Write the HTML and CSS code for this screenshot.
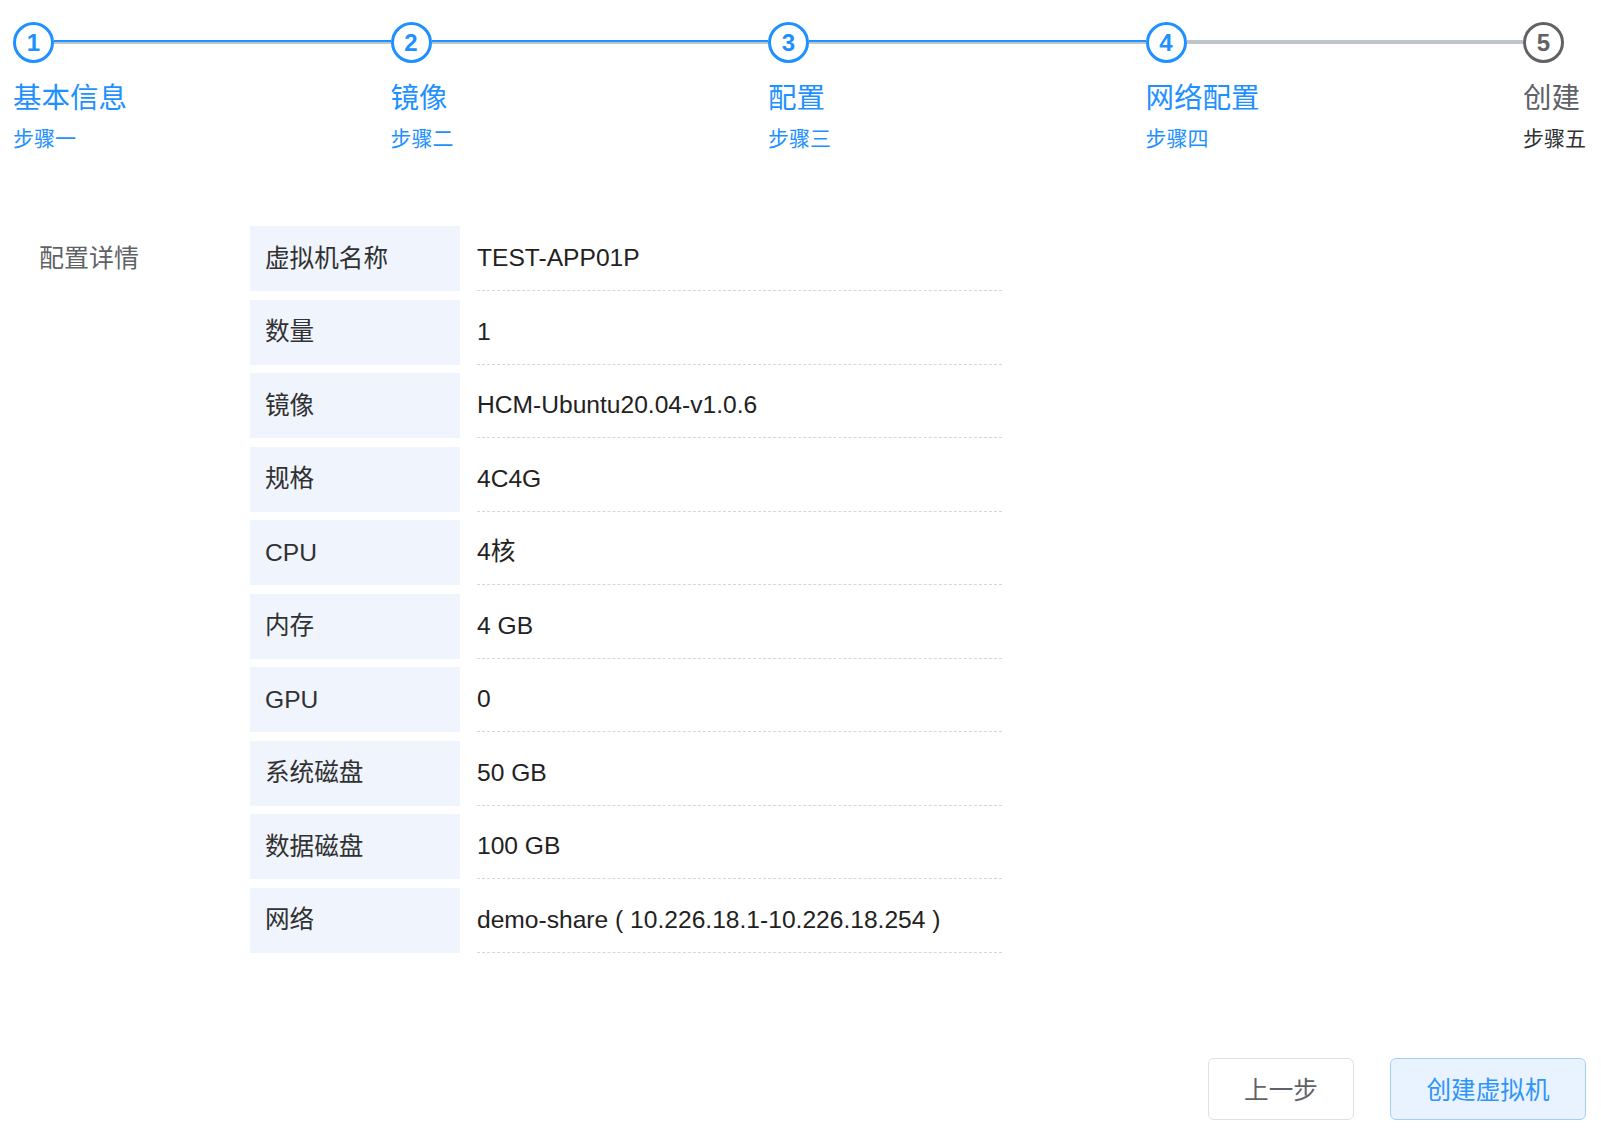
FILE: index.html
```html
<!DOCTYPE html>
<html lang="zh">
<head>
<meta charset="utf-8">
<title>创建虚拟机</title>
<link rel="stylesheet" href="styles.css">
</head>
<body>
<div class="steps">
  <div class="step done">
    <div class="head"><span class="icon">1</span><span class="line"><i class="fill"></i></span></div>
    <div class="title">基本信息</div>
    <div class="desc">步骤一</div>
  </div>
  <div class="step done">
    <div class="head"><span class="icon">2</span><span class="line"><i class="fill"></i></span></div>
    <div class="title">镜像</div>
    <div class="desc">步骤二</div>
  </div>
  <div class="step done">
    <div class="head"><span class="icon">3</span><span class="line"><i class="fill"></i></span></div>
    <div class="title">配置</div>
    <div class="desc">步骤三</div>
  </div>
  <div class="step done">
    <div class="head"><span class="icon">4</span><span class="line"></span></div>
    <div class="title">网络配置</div>
    <div class="desc">步骤四</div>
  </div>
  <div class="step wait">
    <div class="head"><span class="icon">5</span></div>
    <div class="title">创建</div>
    <div class="desc">步骤五</div>
  </div>
</div>

<div class="section">
  <div class="section-label">配置详情</div>
  <div class="detail">
    <div class="row"><div class="key zh">虚拟机名称</div><div class="val">TEST-APP01P</div></div>
    <div class="row"><div class="key zh">数量</div><div class="val">1</div></div>
    <div class="row"><div class="key zh">镜像</div><div class="val">HCM-Ubuntu20.04-v1.0.6</div></div>
    <div class="row"><div class="key zh">规格</div><div class="val">4C4G</div></div>
    <div class="row"><div class="key">CPU</div><div class="val zh">4核</div></div>
    <div class="row"><div class="key zh">内存</div><div class="val">4 GB</div></div>
    <div class="row"><div class="key">GPU</div><div class="val">0</div></div>
    <div class="row"><div class="key zh">系统磁盘</div><div class="val">50 GB</div></div>
    <div class="row"><div class="key zh">数据磁盘</div><div class="val">100 GB</div></div>
    <div class="row"><div class="key zh">网络</div><div class="val">demo-share ( 10.226.18.1-10.226.18.254 )</div></div>
  </div>
</div>

<div class="footer">
  <button class="btn btn-default">上一步</button>
  <button class="btn btn-primary">创建虚拟机</button>
</div>
</body>
</html>
```

FILE: styles.css
```css
html, body {
  margin: 0;
  padding: 0;
  background: #ffffff;
}
body {
  font-family: "Liberation Sans", "Noto Sans CJK SC", sans-serif;
  color: #303133;
  padding-top: 22px;
}

/* steps */
.steps {
  display: grid;
  grid-template-columns: repeat(4, 1fr) 65px;
  margin: 0 13px;
}
.step {
  display: flex;
  flex-direction: column;
  align-items: flex-start;
  min-width: 0;
}
.head {
  display: flex;
  align-items: center;
  width: 100%;
  height: 41px;
}
.icon {
  box-sizing: border-box;
  flex: none;
  width: 41px;
  height: 41px;
  border: 3px solid #1e90ff;
  border-radius: 50%;
  display: flex;
  align-items: center;
  justify-content: center;
  font-weight: bold;
  font-size: 24px;
  color: #1e90ff;
  background: #fff;
}
.line {
  flex: 1;
  height: 4px;
  margin-top: -1px;
  background: #c0c4cc;
  position: relative;
}
.line .fill {
  position: absolute;
  left: 0;
  right: 0;
  top: 0;
  height: 2px;
  background: #1e90ff;
}
.title {
  margin-top: 15px;
  font-size: 28.5px;
  line-height: 40px;
  color: #1e90ff;
  white-space: nowrap;
}
.desc {
  margin-top: 6px;
  font-size: 21px;
  line-height: 30px;
  color: #1e90ff;
  white-space: nowrap;
}
.wait .icon {
  border-color: #606266;
  color: #606266;
}
.wait .title {
  color: #606266;
}
.wait .desc {
  color: #303133;
}

/* details */
.section {
  display: flex;
  margin: 72px 0 0 39px;
}
.section-label {
  box-sizing: border-box;
  flex: none;
  width: 211px;
  height: 65px;
  padding-bottom: 6px;
  display: flex;
  align-items: center;
  font-size: 25px;
  color: #606266;
}
.detail {
  display: flex;
  flex-direction: column;
  gap: 8.5px;
}
.row {
  display: flex;
  height: 65px;
}
.key {
  box-sizing: border-box;
  width: 210px;
  padding-left: 15px;
  background: #f0f4fc;
  display: flex;
  align-items: center;
  font-size: 24.6px;
  color: #303133;
}
.val {
  box-sizing: border-box;
  width: 525px;
  margin-left: 17px;
  border-bottom: 1px dashed #d4d7de;
  display: flex;
  align-items: center;
  font-size: 24.6px;
  color: #222222;
}
.key.zh,
.val.zh {
  padding-bottom: 6px;
}

/* footer */
.footer {
  display: flex;
  justify-content: flex-end;
  gap: 36px;
  margin-top: 105px;
  padding-right: 15px;
}
.btn {
  box-sizing: border-box;
  height: 62px;
  padding: 0 0 1px;
  border-radius: 6px;
  font-family: "Liberation Sans", "Noto Sans CJK SC", sans-serif;
  font-size: 24.6px;
  cursor: pointer;
}
.btn-default {
  width: 146px;
  border: 1px solid #dcdfe6;
  background: #ffffff;
  color: #606266;
}
.btn-primary {
  width: 196px;
  border: 1px solid #a0cfff;
  background: #e8f3ff;
  color: #2f95f5;
}
```
